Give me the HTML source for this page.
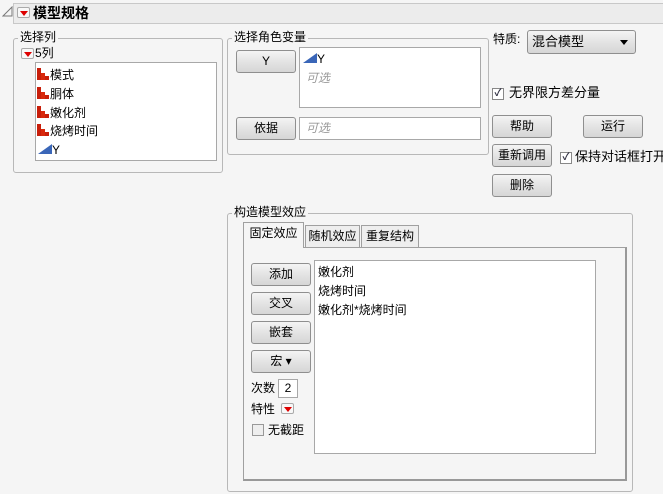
<!DOCTYPE html><html><head><meta charset="utf-8"><style>
*{box-sizing:border-box;margin:0;padding:0}
body{width:663px;height:494px;background:#f5f5f5;font-family:"Liberation Sans","Noto Sans CJK SC",sans-serif;font-size:12px;color:#000;position:relative;overflow:hidden}
.a{position:absolute}
.grp{position:absolute;border:1px solid #b8b8b8;border-radius:3px}
.leg{position:absolute;background:#f5f5f5;padding:0 2px;line-height:14px}
.btn{position:absolute;border:1px solid #8f8f8f;border-radius:3px;background:linear-gradient(#f4f4f4,#e2e2e2 55%,#d6d6d6);text-align:center;line-height:20px}
.box{position:absolute;background:#fff;border:1px solid #a8a8a8}
.rt{position:absolute;width:13px;height:11px;border:1px solid #aaa;border-radius:2px;background:#f8f8f8}
.rt:after{content:"";position:absolute;left:2px;top:3px;border-left:4px solid transparent;border-right:4px solid transparent;border-top:5px solid #d00}
.cb{position:absolute;width:12px;height:12px;border:1px solid #888;background:#fff;font-size:10px;line-height:10px;text-align:center;color:#334;font-weight:bold}
.it{position:absolute;line-height:18px;white-space:nowrap}
.bar{display:inline-block;vertical-align:-1px}
.tri{display:inline-block;width:0;height:0;border-left:14px solid transparent;border-bottom:10px solid #3a66b8;vertical-align:0}
.tab{position:absolute;border:1px solid #a0a0a0;border-bottom:none;background:#eee;text-align:center;line-height:20px}
</style></head><body>
<svg class="a" style="left:2px;top:6px" width="11" height="11"><path d="M1 10 L10 1 L10 10 Z" fill="none" stroke="#777" stroke-width="1"/></svg>
<div class="a" style="left:13px;top:3px;width:660px;height:21px;background:#ececec;border:1px solid #c8c8c8"></div>
<div class="rt" style="left:17px;top:7px"></div>
<div class="a" style="left:33px;top:4px;font-size:14px;font-weight:bold;line-height:18px">模型规格</div>

<div class="grp" style="left:13px;top:38px;width:210px;height:135px"></div>
<div class="leg" style="left:18px;top:30px">选择列</div>
<div class="rt" style="left:21px;top:48px"></div>
<div class="it" style="left:35px;top:44px">5列</div>
<div class="box" style="left:35px;top:62px;width:182px;height:99px"></div>
<div class="it" style="left:37px;top:66px"><svg class="bar" width="13" height="13"><rect x="0" y="1" width="4" height="12" fill="#c81e0a"/><rect x="4" y="6" width="4" height="7" fill="#d8280c"/><rect x="8" y="9" width="4" height="4" fill="#c81e0a"/></svg>模式</div>
<div class="it" style="left:37px;top:85px"><svg class="bar" width="13" height="13"><rect x="0" y="1" width="4" height="12" fill="#c81e0a"/><rect x="4" y="6" width="4" height="7" fill="#d8280c"/><rect x="8" y="9" width="4" height="4" fill="#c81e0a"/></svg>胴体</div>
<div class="it" style="left:37px;top:104px"><svg class="bar" width="13" height="13"><rect x="0" y="1" width="4" height="12" fill="#c81e0a"/><rect x="4" y="6" width="4" height="7" fill="#d8280c"/><rect x="8" y="9" width="4" height="4" fill="#c81e0a"/></svg>嫩化剂</div>
<div class="it" style="left:37px;top:122px"><svg class="bar" width="13" height="13"><rect x="0" y="1" width="4" height="12" fill="#c81e0a"/><rect x="4" y="6" width="4" height="7" fill="#d8280c"/><rect x="8" y="9" width="4" height="4" fill="#c81e0a"/></svg>烧烤时间</div>
<div class="it" style="left:38px;top:141px"><span class="tri"></span>Y</div>

<div class="grp" style="left:227px;top:38px;width:262px;height:117px"></div>
<div class="leg" style="left:232px;top:30px">选择角色变量</div>
<div class="btn" style="left:236px;top:50px;width:60px;height:23px">Y</div>
<div class="box" style="left:299px;top:47px;width:182px;height:61px"></div>
<div class="it" style="left:303px;top:50px"><span class="tri"></span>Y</div>
<div class="it" style="left:306px;top:69px;color:#999;font-style:italic">可选</div>
<div class="btn" style="left:236px;top:117px;width:60px;height:23px">依据</div>
<div class="box" style="left:299px;top:117px;width:182px;height:23px"></div>
<div class="it" style="left:306px;top:119px;color:#999;font-style:italic">可选</div>

<div class="it" style="left:493px;top:30px">特质:</div>
<div class="btn" style="left:527px;top:30px;width:109px;height:24px;text-align:left;padding-left:4px;font-size:13px;line-height:22px">混合模型<span class="a" style="right:7px;top:9px;border-left:4px solid transparent;border-right:4px solid transparent;border-top:5px solid #000"></span></div>
<div class="cb" style="left:492px;top:88px">✓</div>
<div class="it" style="left:509px;top:84px;font-size:13px">无界限方差分量</div>
<div class="btn" style="left:492px;top:115px;width:60px;height:23px">帮助</div>
<div class="btn" style="left:583px;top:115px;width:60px;height:23px">运行</div>
<div class="btn" style="left:492px;top:144px;width:60px;height:23px">重新调用</div>
<div class="cb" style="left:560px;top:152px">✓</div>
<div class="it" style="left:575px;top:148px;font-size:13px">保持对话框打开</div>
<div class="btn" style="left:492px;top:174px;width:60px;height:23px">删除</div>

<div class="grp" style="left:227px;top:213px;width:406px;height:279px"></div>
<div class="leg" style="left:232px;top:205px">构造模型效应</div>
<div class="a" style="left:243px;top:247px;width:384px;height:234px;border:1px solid #a0a0a0;border-right:2px solid #999;border-bottom:2px solid #999;background:#f5f5f5"></div>
<div class="tab" style="left:305px;top:225px;width:55px;height:22px">随机效应</div>
<div class="tab" style="left:361px;top:225px;width:58px;height:22px">重复结构</div>
<div class="tab" style="left:243px;top:222px;width:61px;height:26px;background:#f5f5f5">固定效应</div>
<div class="btn" style="left:251px;top:263px;width:60px;height:23px">添加</div>
<div class="btn" style="left:251px;top:292px;width:60px;height:23px">交叉</div>
<div class="btn" style="left:251px;top:321px;width:60px;height:23px">嵌套</div>
<div class="btn" style="left:251px;top:350px;width:60px;height:23px">宏 ▾</div>
<div class="it" style="left:251px;top:379px">次数</div>
<div class="box" style="left:278px;top:379px;width:20px;height:19px;text-align:center;line-height:17px">2</div>
<div class="it" style="left:251px;top:400px">特性</div>
<div class="rt" style="left:281px;top:403px"></div>
<div class="cb" style="left:252px;top:424px;border-color:#999;background:#eee"></div>
<div class="it" style="left:268px;top:421px">无截距</div>
<div class="box" style="left:314px;top:260px;width:282px;height:194px"></div>
<div class="it" style="left:318px;top:263px">嫩化剂</div>
<div class="it" style="left:318px;top:282px">烧烤时间</div>
<div class="it" style="left:318px;top:301px">嫩化剂*烧烤时间</div>
</body></html>
